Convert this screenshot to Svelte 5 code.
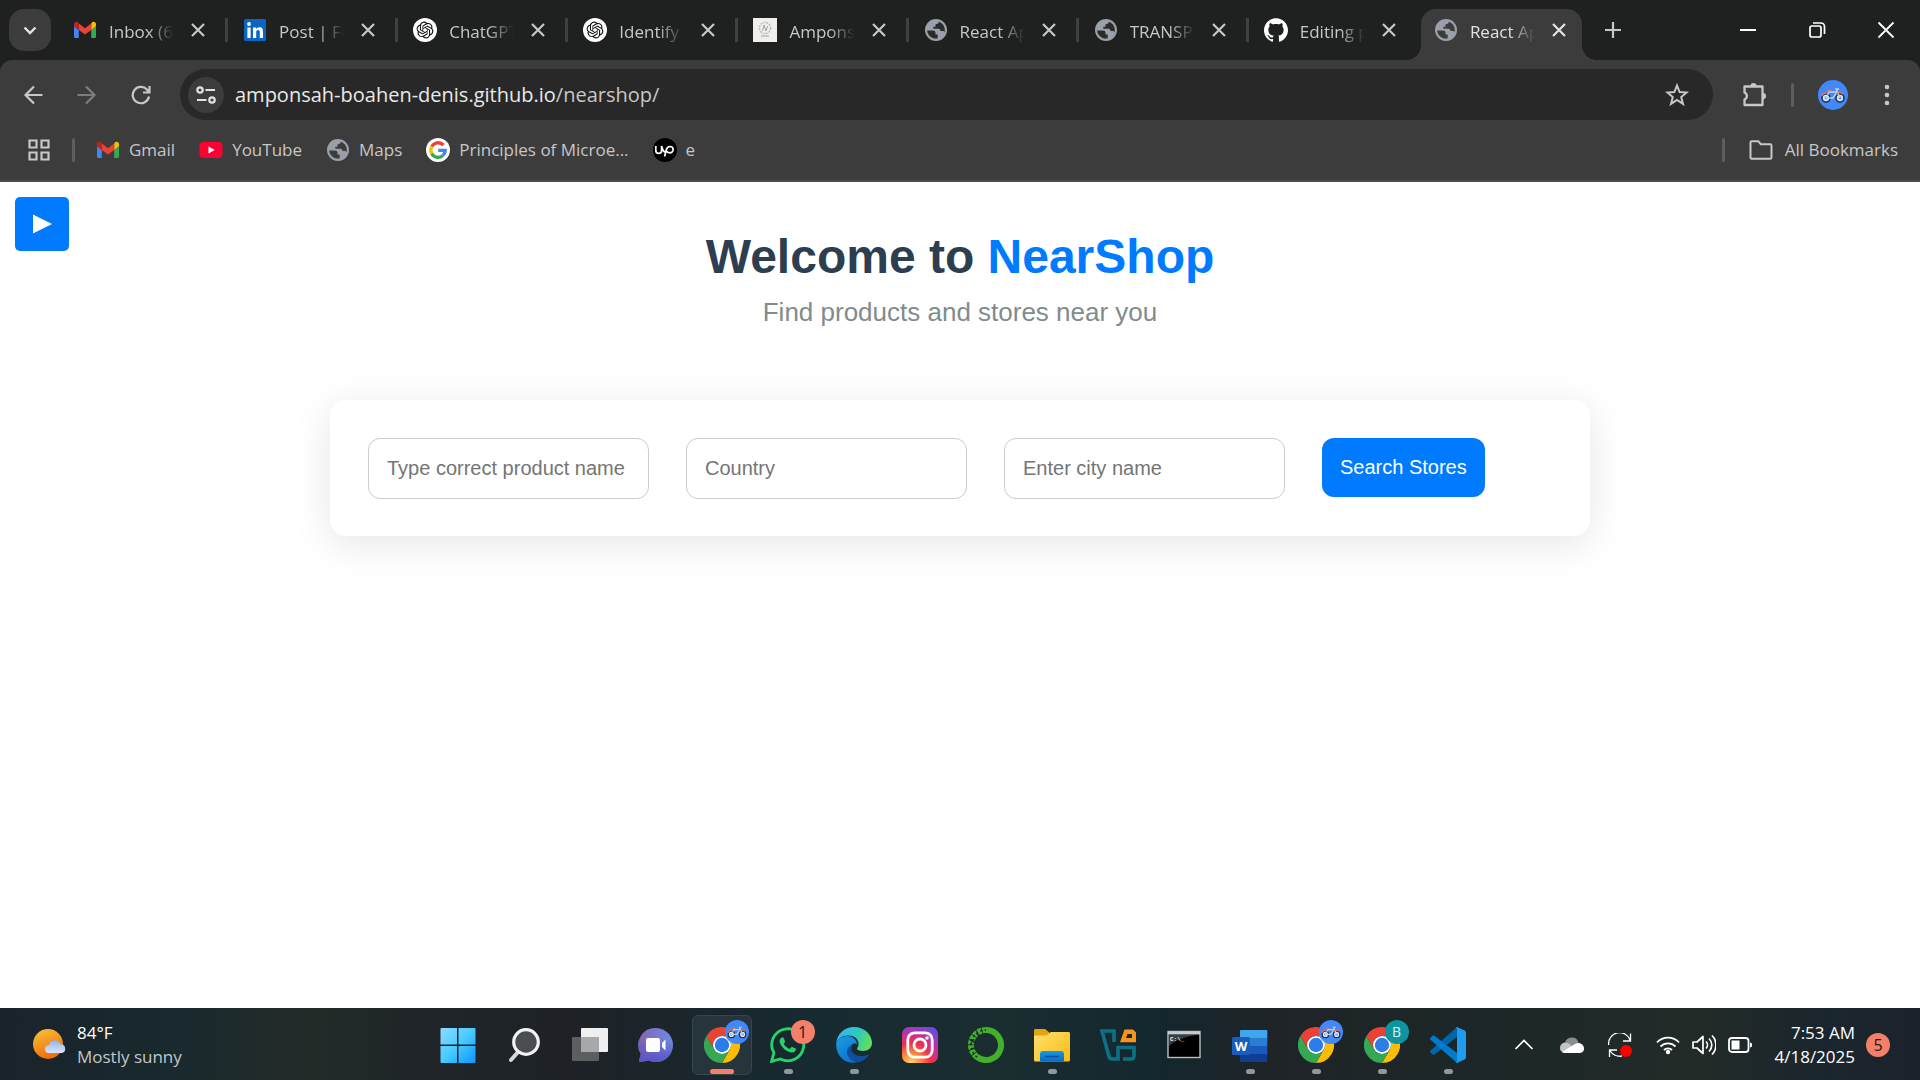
<script>
  const tabs = [
    { title: 'Inbox (686)', icon: 'gmail' },
    { title: 'Post | Feed', icon: 'linkedin' },
    { title: 'ChatGPT', icon: 'openai' },
    { title: 'Identify co', icon: 'openai' },
    { title: 'Amponsah', icon: 'crest' },
    { title: 'React App', icon: 'globe' },
    { title: 'TRANSPORT', icon: 'globe' },
    { title: 'Editing port', icon: 'github' },
    { title: 'React App', icon: 'globe', active: true }
  ];

  const bookmarks = [
    { title: 'Gmail', icon: 'gmail' },
    { title: 'YouTube', icon: 'youtube' },
    { title: 'Maps', icon: 'globe' },
    { title: 'Principles of Microe...', icon: 'google' },
    { title: 'e', icon: 'upwork' }
  ];

  const apps = [
    { name: 'Start', icon: 'windows' },
    { name: 'Search', icon: 'search' },
    { name: 'Task View', icon: 'taskview' },
    { name: 'Chat', icon: 'chat' },
    { name: 'Chrome', icon: 'chrome', badge: 'bike', open: true, focused: true },
    { name: 'WhatsApp', icon: 'whatsapp', badge: 'count', open: true },
    { name: 'Edge', icon: 'edge', open: true },
    { name: 'Instagram', icon: 'instagram' },
    { name: 'Anaconda', icon: 'anaconda' },
    { name: 'File Explorer', icon: 'folder', open: true },
    { name: 'VirtualBox', icon: 'vbox' },
    { name: 'Command Prompt', icon: 'cmd' },
    { name: 'Word', icon: 'word', open: true },
    { name: 'Chrome, second profile', icon: 'chrome', badge: 'bike', open: true },
    { name: 'Chrome, third profile', icon: 'chrome', badge: 'letter', open: true },
    { name: 'Visual Studio Code', icon: 'vscode', open: true }
  ];

  let product = $state('');
  let country = $state('');
  let city = $state('');
</script>

{#snippet bike()}
  <svg class="bike" viewBox="0 0 30 30" aria-hidden="true">
    <circle cx="15" cy="15" r="15" fill="#4388fb" />
    <g fill="#d6e9fa" stroke="#2b2f3d" stroke-width="1.6">
      <circle cx="8" cy="18" r="4" />
      <circle cx="22" cy="18" r="4" />
    </g>
    <circle cx="8" cy="18" r="1.4" fill="#4388fb" />
    <circle cx="22" cy="18" r="1.4" fill="#4388fb" />
    <path d="M8 18l3-6h8l-4 6zM22 18l-4-9h3" fill="none" stroke="#b9d6ee" stroke-width="1.4" />
    <path d="M9 10.5h4M3.5 16a5 5 0 0 1 5-3M18 14a5 5 0 0 1 7 0" fill="none" stroke="#e8744f" stroke-width="1.4" />
  </svg>
{/snippet}

{#snippet icon(name)}
  {#if name === 'gmail'}
    <svg viewBox="0 0 24 24" aria-hidden="true">
      <path fill="#4285f4" d="M2.6 20h3.2v-8.1L1 8.3v10.1C1 19.3 1.7 20 2.6 20z" />
      <path fill="#34a853" d="M18.2 20h3.2c.9 0 1.6-.7 1.6-1.6V8.3l-4.8 3.6z" />
      <path fill="#fbbc04" d="M18.2 5.6v6.3L23 8.3V6.2c0-2-2.3-3.1-3.8-1.9z" />
      <path fill="#ea4335" d="M5.8 11.9V5.6l6.2 4.7 6.2-4.7v6.3L12 16.6z" />
      <path fill="#c5221f" d="M1 6.2v2.1l4.8 3.6V5.6L4.8 4.3C3.3 3.1 1 4.2 1 6.2z" />
    </svg>
  {:else if name === 'linkedin'}
    <svg viewBox="0 0 24 24" aria-hidden="true">
      <rect x="1" y="1" width="22" height="22" rx="1.5" fill="#0a66c2" />
      <path fill="#fff" d="M4.4 9.5h3.2V20H4.4zM10 9.5h3V11c.6-1 1.8-1.8 3.4-1.8 3 0 3.6 2 3.6 4.7V20h-3.2v-5.4c0-1.4-.1-2.7-1.7-2.7s-1.9 1.2-1.9 2.6V20H10z" />
      <circle cx="6" cy="6" r="1.9" fill="#fff" />
    </svg>
  {:else if name === 'openai'}
    <svg viewBox="0 0 24 24" aria-hidden="true">
      <circle cx="12" cy="12" r="12" fill="#fff" />
      <path transform="translate(3.6 3.6) scale(.7)" fill="#111" d="M22.2819 9.8211a5.9847 5.9847 0 0 0-.5157-4.9108 6.0462 6.0462 0 0 0-6.5098-2.9A6.0651 6.0651 0 0 0 4.9807 4.1818a5.9847 5.9847 0 0 0-3.9977 2.9 6.0462 6.0462 0 0 0 .7427 7.0966 5.98 5.98 0 0 0 .511 4.9107 6.051 6.051 0 0 0 6.5146 2.9001A5.9847 5.9847 0 0 0 13.2599 24a6.0557 6.0557 0 0 0 5.7718-4.2058 5.9894 5.9894 0 0 0 3.9977-2.9001 6.0557 6.0557 0 0 0-.7475-7.0729zm-9.022 12.6081a4.4755 4.4755 0 0 1-2.8764-1.0408l.1419-.0804 4.7783-2.7582a.7948.7948 0 0 0 .3927-.6813v-6.7369l2.02 1.1686a.071.071 0 0 1 .038.052v5.5826a4.504 4.504 0 0 1-4.4945 4.4944zm-9.6607-4.1254a4.4708 4.4708 0 0 1-.5346-3.0137l.142.0852 4.783 2.7582a.7712.7712 0 0 0 .7806 0l5.8428-3.3685v2.3324a.0804.0804 0 0 1-.0332.0615L9.74 19.9502a4.4992 4.4992 0 0 1-6.1408-1.6464zM2.3408 7.8956a4.485 4.485 0 0 1 2.3655-1.9728V11.6a.7664.7664 0 0 0 .3879.6765l5.8144 3.3543-2.0201 1.1685a.0757.0757 0 0 1-.071 0l-4.8303-2.7865A4.504 4.504 0 0 1 2.3408 7.872zm16.5963 3.8558L13.1038 8.364 15.1192 7.2a.0757.0757 0 0 1 .071 0l4.8303 2.7913a4.4944 4.4944 0 0 1-.6765 8.1042v-5.6772a.79.79 0 0 0-.407-.667zm2.0107-3.0231l-.142-.0852-4.7735-2.7818a.7759.7759 0 0 0-.7854 0L9.409 9.2297V6.8974a.0662.0662 0 0 1 .0284-.0615l4.8303-2.7866a4.4992 4.4992 0 0 1 6.6802 4.66zM8.3065 12.863l-2.02-1.1638a.0804.0804 0 0 1-.038-.0567V6.0742a4.4992 4.4992 0 0 1 7.3757-3.4537l-.142.0805L8.704 5.459a.7948.7948 0 0 0-.3927.6813zm1.0976-2.3654l2.602-1.4998 2.6069 1.4998v2.9994l-2.5974 1.4997-2.6067-1.4997Z" />
    </svg>
  {:else if name === 'crest'}
    <svg viewBox="0 0 24 24" aria-hidden="true">
      <path fill="#f1efeb" d="M0 0h24v24H0z" />
      <circle cx="12" cy="10" r="5.6" fill="none" stroke="#bdbdbd" stroke-width="1.5" stroke-dasharray="2 1" />
      <path d="M9.5 13l1.500-6 2 6 1.500-5M8 18h8" fill="none" stroke="#a4a4a4" />
    </svg>
  {:else if name === 'globe'}
    <svg viewBox="0 0 24 24" aria-hidden="true">
      <circle cx="12" cy="12" r="11" fill="#9aa0a9" />
      <path class="sea" d="M3.200 12.500h5.300c2.200 0 3 .8 3 2.600v1.400h2.200v3.900c-5.300 1-10.200-2.800-10.500-7.900zM14.800 3.700c-.2 1.800-1.500 2.500-3.300 2.500v2.500H9.300v2.100h5.200c1.500 0 1.900.9 1.900 2.300h2c1.200 0 1.800.5 2.100 1.300 1.300-4.600-1.100-9.200-5.700-10.700z" />
    </svg>
  {:else if name === 'github'}
    <svg viewBox="0 0 24 24" aria-hidden="true">
      <path fill="#fff" d="M12 .297c-6.630 0-12 5.373-12 12 0 5.303 3.438 9.800 8.205 11.385.6.113.82-.258.82-.577 0-.285-.01-1.040-.015-2.040-3.338.724-4.042-1.610-4.042-1.610C4.422 18.070 3.633 17.700 3.633 17.700c-1.087-.744.084-.729.084-.729 1.205.084 1.838 1.236 1.838 1.236 1.070 1.835 2.809 1.305 3.495.998.108-.776.417-1.305.76-1.605-2.665-.3-5.466-1.332-5.466-5.930 0-1.310.465-2.380 1.235-3.220-.135-.303-.54-1.523.105-3.176 0 0 1.005-.322 3.300 1.230.96-.267 1.980-.399 3-.405 1.020.006 2.040.138 3 .405 2.280-1.552 3.285-1.230 3.285-1.230.645 1.653.24 2.873.12 3.176.765.84 1.230 1.910 1.230 3.220 0 4.610-2.805 5.625-5.475 5.920.42.36.81 1.096.81 2.220 0 1.606-.015 2.896-.015 3.286 0 .315.21.69.825.57C20.565 22.092 24 17.592 24 12.297c0-6.627-5.373-12-12-12" />
    </svg>
  {:else if name === 'youtube'}
    <svg viewBox="0 0 24 24" aria-hidden="true">
      <rect x="0.5" y="4" width="23" height="16" rx="4" fill="#ff0033" />
      <path fill="#fff" d="M9.5 8.6l6.2 3.4-6.2 3.4z" />
    </svg>
  {:else if name === 'google'}
    <svg viewBox="0 0 24 24" aria-hidden="true">
      <circle cx="12" cy="12" r="12" fill="#fff" />
      <g fill="none" stroke-width="3.3">
        <path stroke="#ea4335" d="M17.500 7.200A7.200 7.200 0 0 0 5.800 8.500" />
        <path stroke="#fbbc05" d="M5.800 8.500a7.200 7.200 0 0 0-.1 6.900" />
        <path stroke="#34a853" d="M5.700 15.400a7.200 7.200 0 0 0 10.900 2.300" />
        <path stroke="#4285f4" d="M16.600 17.700A7.200 7.200 0 0 0 19.200 12.400H12.200" />
      </g>
    </svg>
  {:else if name === 'upwork'}
    <svg viewBox="0 0 24 24" aria-hidden="true">
      <circle cx="12" cy="12" r="12" fill="#000" />
      <path d="M2.800 8v4.500a2.900 2.900 0 0 0 5.800 0V8c.6 3 2 5.500 3.600 6.300M11.600 18.500l1.700-6.800c.6-2.200 1.800-3.200 3.600-3.200a3.200 3.200 0 1 1 0 6.400c-1.800 0-3.200-.9-4.200-2.600" fill="none" stroke="#fff" stroke-width="1.700" />
    </svg>
  {:else if name === 'windows'}
    <svg viewBox="0 0 36 36" aria-hidden="true">
      <defs>
        <linearGradient id="win" x1="0" y1="0" x2="1" y2="1">
          <stop offset="0" stop-color="#8bdcff" /><stop offset=".5" stop-color="#48caff" /><stop offset="1" stop-color="#0a95ff" />
        </linearGradient>
      </defs>
      <path fill="url(#win)" d="M1.500 1H17v16.500H.500V2a1 1 0 0 1 1-1zM18.500 1h16a1 1 0 0 1 1 1v15.500h-17zM.500 19H17v17H1.500a1 1 0 0 1-1-1zM18.500 19h17v16a1 1 0 0 1-1 1h-16z" />
    </svg>
  {:else if name === 'search'}
    <svg viewBox="0 0 36 36" aria-hidden="true">
      <path d="M12 25l-7 8" stroke="#d5d8da" stroke-width="4" stroke-linecap="round" />
      <circle cx="20" cy="15" r="12.3" fill="#4a4e51" stroke="#f1f2f3" stroke-width="3.2" />
    </svg>
  {:else if name === 'taskview'}
    <svg viewBox="0 0 36 36" aria-hidden="true">
      <rect x="0" y="10" width="27" height="24" rx="1" fill="#5c5e60" />
      <rect x="9" y="1" width="27" height="24" rx="1" fill="#f0f0f0" />
      <path fill="#a7a8a9" d="M9 10h18v15H9z" />
    </svg>
  {:else if name === 'chat'}
    <svg viewBox="0 0 36 36" aria-hidden="true">
      <defs>
        <linearGradient id="chat" x1="0" y1="0" x2="1" y2="0"><stop offset="0" stop-color="#8662b0" /><stop offset="1" stop-color="#6d8ce4" /></linearGradient>
        <linearGradient id="chat-low" x1="0" y1="0" x2="0" y2="1"><stop offset=".3" stop-color="#5558c8" stop-opacity="0" /><stop offset="1" stop-color="#5755c6" /></linearGradient>
      </defs>
      <path fill="url(#chat)" d="M18 1a17 17 0 1 1-7 32.500L2 35c-.8.100-1.200-.7-1-1.300L2.800 27A17 17 0 0 1 18 1z" />
      <path fill="url(#chat-low)" d="M18 1a17 17 0 1 1-7 32.500L2 35c-.8.100-1.200-.7-1-1.300L2.800 27A17 17 0 0 1 18 1z" />
      <rect x="8" y="11" width="14" height="14" rx="2" fill="#fff" />
      <path fill="#fff" d="M24 16l3.500-3.500v11L24 20z" />
    </svg>
  {:else if name === 'chrome'}
    <svg viewBox="0 0 36 36" aria-hidden="true">
      <path fill="#ea4335" d="M2.400 9A18 18 0 0 1 33.600 9H18a9 9 0 0 0-7.800 13.500z" />
      <path fill="#fbbc04" d="M33.600 9A18 18 0 0 1 18 36l7.800-13.500A9 9 0 0 0 18 9z" />
      <path fill="#34a853" d="M18 36A18 18 0 0 1 2.400 9l7.800 13.500a9 9 0 0 0 15.600 0z" />
      <circle cx="18" cy="18" r="9" fill="#fff" />
      <circle cx="18" cy="18" r="7.2" fill="#2b7de9" />
    </svg>
  {:else if name === 'whatsapp'}
    <svg viewBox="0 0 36 36" aria-hidden="true">
      <path d="M1.600 34.400l2.300-8.600A16 16 0 1 1 10.400 32z" fill="none" stroke="#25d366" stroke-width="2.8" />
      <path transform="translate(1.5 1.8) scale(1.35)" fill="#25d366" d="M17.472 14.382c-.297-.149-1.758-.867-2.030-.967-.273-.099-.471-.148-.67.15-.197.297-.767.966-.94 1.164-.173.199-.347.223-.644.075-.297-.15-1.255-.463-2.390-1.475-.883-.788-1.480-1.761-1.653-2.059-.173-.297-.018-.458.13-.606.134-.133.298-.347.446-.52.149-.174.198-.298.298-.497.099-.198.05-.371-.025-.52-.075-.149-.669-1.612-.916-2.207-.242-.579-.487-.5-.669-.51-.173-.008-.371-.01-.57-.01-.198 0-.52.074-.792.372-.272.297-1.040 1.016-1.040 2.479 0 1.462 1.065 2.875 1.213 3.074.149.198 2.096 3.200 5.077 4.487.709.306 1.262.489 1.694.625.712.227 1.360.195 1.871.118.571-.085 1.758-.719 2.006-1.413.248-.694.248-1.289.173-1.413-.074-.124-.272-.198-.57-.347" />
    </svg>
  {:else if name === 'edge'}
    <svg viewBox="0 0 36 36" aria-hidden="true">
      <defs>
        <linearGradient id="edge-top" x1="0" y1="0.3" x2="1" y2="0.6"><stop offset="0" stop-color="#34b6ee" /><stop offset=".55" stop-color="#2fc8c0" /><stop offset="1" stop-color="#66e050" /></linearGradient>
        <linearGradient id="edge-side" x1="0" y1="0" x2=".6" y2="1"><stop offset="0" stop-color="#1b9de2" /><stop offset="1" stop-color="#0b70cc" /></linearGradient>
      </defs>
      <path fill="url(#edge-side)" d="M.2 16C2 11 7 9 11 9c7 0 10 5 10 8-3-2-8 1-7 7 1 5 6 8 12 8-3 3-7 4-10 3.800C7 35-.5 27 .2 16z" />
      <path fill="#0f4f9e" d="M14 19c-3 2-4 6-2 10 2.500 5 8 6.500 11 6.200 5-1.200 8-4.200 10-8-6 3-13 2-16-1.200-1.800-2-2.300-5 0-8-1 0-2 .200-3 1z" />
      <path fill="url(#edge-top)" d="M.200 16C1.200 7 8 0 18 0c11 0 18 8 18 16 0 5-4 8-9 8-4 0-6-1-6-2.200 0-1 1.600-2 1.600-5C22.600 12 18 8.600 12 8.600 6 8.600 1.500 12 .200 16z" />
    </svg>
  {:else if name === 'instagram'}
    <svg viewBox="0 0 36 36" aria-hidden="true">
      <defs>
        <radialGradient id="insta" cx=".25" cy="1" r="1.1"><stop offset="0" stop-color="#ffd76a" /><stop offset=".25" stop-color="#fd8b3c" /><stop offset=".5" stop-color="#f0304f" /><stop offset=".75" stop-color="#c32fa0" /><stop offset="1" stop-color="#6a4be0" /></radialGradient>
      </defs>
      <rect width="36" height="36" rx="7" fill="url(#insta)" />
      <g fill="none" stroke="#fff" stroke-width="2.8">
        <rect x="5.8" y="5.8" width="24.4" height="24.4" rx="7" />
        <circle cx="18" cy="18" r="6" />
      </g>
      <circle cx="25" cy="11" r="1.8" fill="#fff" />
    </svg>
  {:else if name === 'anaconda'}
    <svg viewBox="0 0 36 36" aria-hidden="true">
      <path d="M18 3a15 15 0 1 1-9 27" fill="none" stroke="#43b02a" stroke-width="6" />
      <path d="M9 30A15 15 0 0 1 18 3" fill="none" stroke="#43b02a" stroke-width="6" stroke-dasharray="4 .8" />
      <path d="M9 30A15 15 0 0 1 18 3" fill="none" stroke="#17272b" stroke-width="1.4" stroke-dasharray="2 2.5" />
      <path d="M2 13l6 3M3 22l6-2M8 6l4 4M2 18l4-6" stroke="#17272b" stroke-width="1.2" />
    </svg>
  {:else if name === 'folder'}
    <svg viewBox="0 0 36 36" aria-hidden="true">
      <defs>
        <linearGradient id="fold" x1="0" y1="0" x2="1" y2="1"><stop offset="0" stop-color="#ffe070" /><stop offset="1" stop-color="#f9bb10" /></linearGradient>
        <linearGradient id="fold-blue" x1="0" y1="0" x2="0" y2="1"><stop offset="0" stop-color="#169be2" /><stop offset="1" stop-color="#0a68c8" /></linearGradient>
      </defs>
      <path fill="#e3a30c" d="M0 3.500C0 2.600.600 2 1.500 2H11l5 4-4 4H0z" />
      <path fill="url(#fold)" d="M0 8.500h12.500L17 5h17.500c.9 0 1.500.6 1.500 1.500V33c0 .9-.6 1.500-1.500 1.500h-33C.600 34.500 0 33.900 0 33z" />
      <path fill="url(#fold-blue)" d="M6 34.500V27a3 3 0 0 1 3-3h18a3 3 0 0 1 3 3v7.500z" />
      <path d="M11 29.500h14" stroke="#0b4f9c" stroke-width="1.5" />
    </svg>
  {:else if name === 'vbox'}
    <svg viewBox="0 0 36 36" aria-hidden="true">
      <path d="M14 15V4H2l7 25.500c.5 1.800 1.400 2.500 3 2.500h6V20.500h16V29c0 2-1 3-3 3h-8" fill="none" stroke="#0b7285" stroke-width="3.6" />
      <path fill="#f7941d" d="M24.500 2.500H33l3 3v9.800H20zM27.500 7L26 11h6V7z" fill-rule="evenodd" />
    </svg>
  {:else if name === 'cmd'}
    <svg viewBox="0 0 36 36" aria-hidden="true">
      <rect x="2" y="4.5" width="32" height="26" fill="#000" stroke="#b9bfc4" stroke-width="1.4" />
      <path fill="#c4cbd0" d="M2 4.500h32v3H2z" />
      <path fill="#3a3c3e" d="M3 8h28C18 10 8 14 3 19z" />
      <text x="4" y="14" class="cmd-text">C:\_</text>
    </svg>
  {:else if name === 'word'}
    <svg viewBox="0 0 36 36" aria-hidden="true">
      <path fill="#41a5ee" d="M9 3h25c.800 0 1.300.500 1.300 1.300V11H8V4.300C8 3.500 8.300 3 9 3z" />
      <path fill="#2b7cd3" d="M8 11h27.300v8H8z" />
      <path fill="#185abd" d="M8 19h27.300v8H8z" />
      <path fill="#103f91" d="M8 27h27.300v6.700c0 .8-.5 1.300-1.300 1.300H9.300c-.8 0-1.300-.5-1.300-1.300z" />
      <rect x="0" y="10" width="18" height="18" rx="1.5" fill="#1b5cbe" />
      <text x="9" y="24" text-anchor="middle" class="word-text">W</text>
    </svg>
  {:else if name === 'vscode'}
    <svg viewBox="0 0 36 36" aria-hidden="true">
      <path fill="#0065a9" d="M27 0v10L4.500 27.500c-.6.500-1.300.4-1.900 0L.5 25.600c-.7-.6-.7-1.500 0-2.200z" />
      <path fill="#007acc" d="M27 36V26L4.500 8.800c-.6-.500-1.300-.4-1.900 0L.5 10.700c-.7.6-.7 1.500 0 2.100z" />
      <path fill="#1f9cf0" d="M27 36c-.8.100-1.500-.2-2-.8.7.700 2 .2 2-.9V1.700c0-1.100-1.300-1.600-2-.9.500-.6 1.200-.9 2-.8l7.600 3.600c.9.400 1.400 1.200 1.400 2.100v24.600c0 .9-.5 1.700-1.400 2.100z" />
    </svg>
  {/if}
{/snippet}

<div class="screen">
  <div class="strip">
    <button class="tab-menu" aria-label="Search tabs">
      <svg viewBox="0 0 24 24" aria-hidden="true"><path d="M6.500 9.500l5.500 5.500 5.500-5.500" fill="none" stroke="#e3e3e3" stroke-width="2.4" /></svg>
    </button>
    <div class="tabs">
      {#each tabs as tab}
        <div class="tab" class:active={tab.active}>
          <div class="face">
            <span class="icon24">{@render icon(tab.icon)}</span>
            <span class="title">{tab.title}</span>
            <button class="close" aria-label="Close tab">
              <svg viewBox="0 0 24 24" aria-hidden="true"><path d="M6 6l12 12M18 6L6 18" stroke="currentColor" stroke-width="2.2" /></svg>
            </button>
          </div>
        </div>
      {/each}
    </div>
    <button class="new-tab" aria-label="New tab">
      <svg viewBox="0 0 24 24" aria-hidden="true"><path d="M12 4v16M4 12h16" stroke="#c7c7c7" stroke-width="2.2" /></svg>
    </button>
    <div class="window-controls">
      <button aria-label="Minimize"><svg viewBox="0 0 24 24" aria-hidden="true"><path d="M4 12h16" stroke="#fff" stroke-width="2" /></svg></button>
      <button aria-label="Restore"><svg viewBox="0 0 24 24" aria-hidden="true"><g fill="none" stroke="#fff" stroke-width="1.7"><rect x="5" y="8" width="11" height="11" rx="2" /><path d="M8 5h8a3.500 3.500 0 0 1 3.500 3.500V16" /></g></svg></button>
      <button aria-label="Close"><svg viewBox="0 0 24 24" aria-hidden="true"><path d="M4.500 4.500l15 15M19.500 4.500l-15 15" stroke="#fff" stroke-width="1.8" /></svg></button>
    </div>
  </div>

  <div class="chrome-bars">
    <div class="toolbar">
      <div class="nav">
        <button aria-label="Back"><svg viewBox="0 0 24 24" aria-hidden="true"><path d="M21.500 12H5M13 3.500L4.500 12l8.500 8.500" fill="none" stroke="#c7c7c7" stroke-width="2.2" /></svg></button>
        <button aria-label="Forward"><svg viewBox="0 0 24 24" aria-hidden="true"><path d="M2.500 12H19M11 3.500l8.500 8.500-8.500 8.500" fill="none" stroke="#7d7d7d" stroke-width="2.2" /></svg></button>
        <button aria-label="Reload"><svg viewBox="0 0 24 24" aria-hidden="true"><path d="M20 13.500A8.200 8.200 0 1 1 18 6.500l2 2.500M20.500 3v6.500H14" fill="none" stroke="#c7c7c7" stroke-width="2.2" /></svg></button>
      </div>
      <div class="omnibox">
        <button class="site-info" aria-label="Site information">
          <svg viewBox="0 0 24 24" aria-hidden="true"><g fill="none" stroke="#e3e3e3" stroke-width="2.2"><circle cx="6" cy="7" r="2.7" /><path d="M11.500 7H21M3 17h9.500" /><circle cx="18" cy="17" r="2.7" /></g></svg>
        </button>
        <div class="url"><b>amponsah-boahen-denis.github.io</b>/nearshop/</div>
        <button class="star" aria-label="Bookmark this page">
          <svg viewBox="0 0 24 24" aria-hidden="true"><path d="M12 2.500l2.600 6.600 7 .4-5.400 4.500 1.800 6.900-6-3.900-6 3.900 1.800-6.900-5.400-4.500 7-.4z" fill="none" stroke="#c7c7c7" stroke-width="2" /></svg>
        </button>
      </div>
      <button class="extensions" aria-label="Extensions">
        <svg viewBox="0 0 28 28" aria-hidden="true"><path d="M4.500 5.500H22.500V24H4.500v-5.500a3.800 3.800 0 0 0 0-7z" fill="none" stroke="#c7c7c7" stroke-width="2.3" stroke-linejoin="round" /><path fill="#c7c7c7" d="M10.500 5a3 3 0 0 1 6 0zM23 12a3 3 0 0 1 0 6.200z" /></svg>
      </button>
      <span class="bar"></span>
      <button class="avatar" aria-label="Profile">{@render bike()}</button>
      <button class="more" aria-label="Menu">
        <svg viewBox="0 0 24 24" aria-hidden="true"><g fill="#c7c7c7"><circle cx="12" cy="4" r="2.3" /><circle cx="12" cy="12" r="2.3" /><circle cx="12" cy="20" r="2.3" /></g></svg>
      </button>
    </div>
    <div class="bookmarks">
      <button class="apps-button" aria-label="Apps">
        <svg viewBox="0 0 24 24" aria-hidden="true"><g fill="none" stroke="#c7c7c7" stroke-width="2.2"><path d="M2.500 2.500h7v7h-7zM14.500 2.500h7v7h-7zM2.500 14.500h7v7h-7zM14.500 14.500h7v7h-7z" /></g></svg>
      </button>
      <span class="bar"></span>
      <nav>
        {#each bookmarks as mark}
          <a href="#top"><span class="icon24">{@render icon(mark.icon)}</span>{mark.title}</a>
        {/each}
      </nav>
      <span class="bar"></span>
      <a class="all" href="#top">
        <svg viewBox="0 0 24 24" aria-hidden="true"><path d="M1.500 4.500c0-.8.500-1.300 1.300-1.300h6.500l2.500 3h9.400c.8 0 1.300.5 1.300 1.300v12c0 .8-.5 1.300-1.300 1.300H2.800c-.8 0-1.300-.5-1.300-1.300z" fill="none" stroke="#c7c7c7" stroke-width="2" /></svg>
        All Bookmarks
      </a>
    </div>
  </div>

  <main id="top">
    <button class="drawer" aria-label="Open menu">
      <svg viewBox="0 0 20 20" aria-hidden="true"><path fill="#fff" d="M1 .5L20 10 1 19.500z" /></svg>
    </button>
    <header>
      <h1>Welcome to <span>NearShop</span></h1>
      <p>Find products and stores near you</p>
    </header>
    <form onsubmit={(event) => event.preventDefault()}>
      <input type="text" aria-label="Product name" placeholder="Type correct product name" bind:value={product} />
      <input type="text" aria-label="Country" placeholder="Country" bind:value={country} />
      <input type="text" aria-label="City" placeholder="Enter city name" bind:value={city} />
      <button type="submit">Search Stores</button>
    </form>
  </main>

  <footer>
    <button class="weather">
      <svg viewBox="0 0 34 34" aria-hidden="true">
        <defs>
          <linearGradient id="sun" x1="0.3" y1="0" x2="0.7" y2="1"><stop offset="0" stop-color="#f5bd32" /><stop offset="1" stop-color="#f0650c" /></linearGradient>
          <linearGradient id="cloud" x1="0" y1="0" x2="0" y2="1"><stop offset="0" stop-color="#8fb2ee" /><stop offset="1" stop-color="#dbe6fb" /></linearGradient>
        </defs>
        <circle cx="15" cy="16" r="15" fill="url(#sun)" />
        <path fill="url(#cloud)" d="M16 25a4 4 0 0 1 0-8 6 6 0 0 1 11.500-.8A4.500 4.500 0 0 1 29 25z" />
      </svg>
      <span class="lines"><span>84°F</span><span class="dim">Mostly sunny</span></span>
    </button>

    <div class="apps">
      {#each apps as app}
        <button class="app" class:open={app.open} class:focused={app.focused} aria-label={app.name}>
          <span class="icon36">{@render icon(app.icon)}</span>
          {#if app.badge}
            <span class="badge {app.badge}">
              {#if app.badge === 'bike'}{@render bike()}{:else if app.badge === 'count'}1{:else}B{/if}
            </span>
          {/if}
        </button>
      {/each}
    </div>

    <div class="tray">
      <button aria-label="Hidden icons"><svg viewBox="0 0 24 24" aria-hidden="true"><path d="M3.500 16L12 7.500l8.500 8.500" fill="none" stroke="#fff" stroke-width="1.7" /></svg></button>
      <button aria-label="OneDrive"><svg viewBox="0 0 24 24" aria-hidden="true"><path fill="#8b8d8e" d="M5 10a7 7 0 0 1 13.500-.5L13 15z" /><path fill="#c2c3c4" d="M0 15a5.500 5.500 0 0 1 8-5l10 8-14 1.500A4.500 4.500 0 0 1 0 15z" /><path fill="#fff" d="M2 19l13-8c5-3 9 1 9 4.500S21.500 20 19 20H5c-1.200 0-2.200-.3-3-1z" /></svg></button>
      <button aria-label="Sync"><svg viewBox="0 0 24 24" aria-hidden="true"><path d="M.7 12A11 11 0 0 1 22 7M22.500.5V8H15M14 23A11 11 0 0 1 2 17.500M1.500 24v-7H9" fill="none" stroke="#fff" stroke-width="1.3" /><circle cx="18" cy="18" r="6" fill="#f00" /></svg></button>
      <div class="status">
        <svg viewBox="0 0 24 24" aria-hidden="true"><g fill="none" stroke="#fff" stroke-width="1.8"><path d="M1 9.500a15 15 0 0 1 22 0M4.500 13.500a10.500 10.500 0 0 1 15 0M8 17a5.600 5.600 0 0 1 8 0" /></g><circle cx="12" cy="19" r="2.2" fill="#fff" /></svg>
        <svg viewBox="0 0 24 24" aria-hidden="true"><g fill="none" stroke="#fff" stroke-width="1.7" stroke-linejoin="round"><path d="M1 9h4l6-5.500v17L5 15H1z" /><path d="M14 8.500a5 5 0 0 1 0 7M17 5.500a9 9 0 0 1 0 13M20 2.500a13.500 13.500 0 0 1 0 19" /></g></svg>
        <svg viewBox="0 0 24 24" aria-hidden="true"><rect x="1" y="5" width="19.5" height="14" rx="3" fill="none" stroke="#fff" stroke-width="1.8" /><path fill="#fff" d="M3.500 7.500h8v9h-8zM22 9.500c1.300 0 2 .7 2 2v1c0 1.300-.7 2-2 2z" /></svg>
      </div>
      <div class="clock"><span>7:53 AM</span><span>4/18/2025</span></div>
      <span class="notices">5</span>
    </div>
  </footer>
</div>

<style>
  :global(body) { margin: 0; }
  .screen {
    display: flex;
    flex-direction: column;
    min-height: 100vh;
    background: #1f2120;
    font-family: 'Open Sans', 'Noto Sans', sans-serif;
    font-size: 17px;
    color: #c7c7c7;
  }
  .screen :global(*) { box-sizing: border-box; }
  svg { display: block; width: 24px; height: 24px; flex: none; }
  button {
    display: grid;
    place-items: center;
    padding: 0;
    border: 0;
    background: none;
    color: inherit;
    font: inherit;
  }
  a { color: inherit; text-decoration: none; }
  .icon24 { flex: none; width: 24px; height: 24px; }
  .bar { flex: none; width: 3px; height: 24px; border-radius: 2px; background: #5e5e5e; }

  /* tab strip */
  .strip { display: flex; height: 60px; padding-left: 9px; background: #1f2120; }
  .tab-menu { flex: none; width: 42px; height: 42px; margin: 9px 7px 0 0; border-radius: 15px; background: #3c3c3c; }
  .tabs { display: flex; flex: 0 1 1531px; min-width: 0; }
  .tab { display: flex; flex: 1; min-width: 0; padding: 9px 0 0 2px; }
  .face {
    position: relative;
    display: flex;
    align-items: center;
    flex: 1;
    min-width: 0;
    gap: 12px;
    margin-right: 4px;
    padding: 0 11px 9px 13px;
    border-radius: 15px 15px 0 0;
  }
  .tab::after { content: ''; width: 3px; height: 24px; margin-top: 9px; background: #3f4040; }
  .tab.active::after, .tab:nth-last-child(2)::after { background: none; }
  .tab.active { color: #e3e3e3; }
  .active .face { background: #3c3c3c; }
  .active .face::before, .active .face::after {
    content: '';
    position: absolute;
    bottom: 0;
    width: 15px;
    height: 15px;
  }
  .active .face::before { right: 100%; background: radial-gradient(circle at 0 0, transparent 15px, #3c3c3c 15px); }
  .active .face::after { left: 100%; background: radial-gradient(circle at 100% 0, transparent 15px, #3c3c3c 15px); }
  .title {
    flex: 1;
    min-width: 0;
    overflow: hidden;
    padding-top: 4px;
    line-height: 24px;
    white-space: nowrap;
    mask-image: linear-gradient(to right, #000 60%, transparent);
  }
  .close { flex: none; width: 24px; height: 24px; }
  .sea { fill: #2a2c2c; }
  .active .sea, .bookmarks .sea { fill: #3c3c3c; }
  .new-tab { flex: none; width: 48px; }
  .window-controls { display: flex; margin-left: auto; }
  .window-controls button { width: 69px; }

  /* toolbar */
  .chrome-bars { border-bottom: 2px solid #4a4a4a; border-radius: 12px 12px 0 0; background: #3c3c3c; }
  .toolbar { display: flex; align-items: center; padding: 9px 12px 0; }
  .nav { display: flex; gap: 12px; margin-right: 18px; }
  .nav button { width: 42px; height: 42px; }
  .omnibox {
    display: flex;
    align-items: center;
    flex: 1;
    min-width: 0;
    height: 51px;
    padding: 0 24px 0 8px;
    border-radius: 26px;
    background: #282828;
  }
  .site-info { width: 36px; height: 36px; border-radius: 18px; background: #3c3c3c; }
  .url { flex: 1; padding-left: 11px; font-size: 20px; line-height: 30px; color: #c7c7c7; }
  .url b { font-weight: 400; color: #e8e8e8; }
  .extensions { width: 42px; height: 42px; margin: 0 16px 0 20px; }
  .extensions svg { width: 28px; height: 28px; }
  .avatar { width: 42px; height: 42px; margin: 0 12px 0 18px; }
  .bike { width: 30px; height: 30px; }
  .more { width: 42px; height: 42px; }
  .bookmarks { display: flex; align-items: center; height: 60px; padding: 0 22px 0 27px; }
  .apps-button { margin-right: 21px; }
  .bookmarks nav { display: flex; flex: 1; gap: 24px; margin-left: 21px; }
  .bookmarks a { display: flex; align-items: center; gap: 9px; line-height: 24px; }
  .bookmarks .all { gap: 12px; margin-left: 24px; }

  /* page */
  main {
    position: relative;
    flex: 1;
    background: #fff;
    font-family: 'Liberation Sans', Arial, sans-serif;
  }
  .drawer {
    position: absolute;
    top: 15px;
    left: 15px;
    width: 54px;
    height: 54px;
    border-radius: 5px;
    background: #007bff;
  }
  .drawer svg { width: 20px; height: 20px; }
  header { padding: 46px 20px 0; text-align: center; }
  h1 { margin: 0; font-size: 48px; line-height: 58px; color: #2c3e50; }
  h1 span { color: #007bff; }
  header p { margin: 10px 0 0; font-size: 26px; line-height: 32px; color: #7f8c8d; }
  form {
    display: grid;
    grid-template-columns: repeat(3, 281px) auto;
    justify-content: start;
    align-items: start;
    gap: 37px;
    max-width: 1260px;
    margin: 72px auto 0;
    padding: 38px 38px 37px;
    border-radius: 16px;
    background: #fff;
    box-shadow: 0 8px 38px rgba(0, 0, 0, 0.1);
  }
  input {
    min-width: 0;
    height: 61px;
    padding: 0 18px;
    border: 1px solid #ccc;
    border-radius: 12px;
    background: #fff;
    color: #222;
    font: 20px 'Liberation Sans', Arial, sans-serif;
  }
  input::placeholder { color: #757575; opacity: 1; }
  form button {
    height: 59px;
    padding: 0 18px;
    border-radius: 12px;
    background: #007bff;
    color: #fff;
    font-size: 20px;
    white-space: nowrap;
  }

  /* taskbar */
  footer {
    display: grid;
    grid-template-columns: 1fr auto 1fr;
    height: 72px;
    padding-top: 2px;
    background: linear-gradient(90deg, #1a232b, #18292e 8%, #232b29 16%, #1f2528 22%, #1e2226 30%, #162a31 42%, #1a2e30 52%, #13272e 60%, #1f2427 66%, #1c2728 78%, #232b28 88%, #1a262d 95%, #1c222c);
    color: #fff;
  }
  .weather { display: flex; align-items: center; justify-content: flex-start; gap: 10px; padding-left: 33px; text-align: left; }
  .weather svg { width: 34px; height: 34px; }
  .lines, .clock { display: flex; flex-direction: column; line-height: 24px; }
  .dim { color: #c3c6c7; }
  .apps { display: flex; padding-right: 15px; }
  .app { position: relative; width: 66px; height: 70px; }
  .icon36, .icon36 svg { display: block; width: 36px; height: 36px; }
  .app.focused::before {
    content: '';
    position: absolute;
    inset: 5px 3px;
    border: 1px solid #35464c;
    border-radius: 6px;
    background: #25353b;
  }
  .icon36 { position: relative; }
  .app.open::after {
    content: '';
    position: absolute;
    bottom: 6px;
    left: 29px;
    width: 9px;
    height: 5px;
    border-radius: 3px;
    background: #92989a;
  }
  .app.focused::after { left: 21px; width: 24px; background: #f5806a; }
  .badge {
    position: absolute;
    top: 10px;
    right: 6px;
    display: grid;
    place-items: center;
    width: 24px;
    height: 24px;
    border-radius: 12px;
    font-size: 16px;
    line-height: 24px;
  }
  .badge .bike { width: 24px; height: 24px; }
  .badge.count { background: #f5806a; color: #1b1b1b; }
  .badge.letter { background: #0e93a1; color: #dff3f5; font-size: 14px; }
  .cmd-text { font: 700 6px 'Liberation Mono', monospace; fill: #fff; }
  .word-text { font: 700 13px 'Open Sans', sans-serif; fill: #fff; }
  .tray { display: flex; align-items: center; justify-content: flex-end; gap: 24px; padding-right: 30px; }
  .status { display: flex; gap: 12px; margin-right: -2px; }
  .clock { align-items: flex-end; }
  .notices { width: 24px; height: 24px; margin-left: -13px; border-radius: 12px; background: #f5806a; color: #1b1b1b; font-size: 16px; line-height: 24px; text-align: center; }
</style>
